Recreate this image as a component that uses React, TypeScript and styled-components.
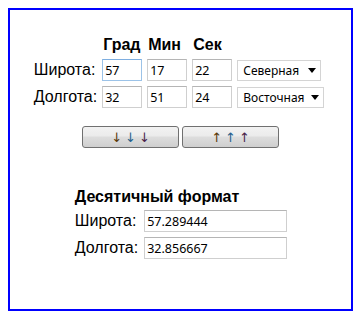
import styled, { createGlobalStyle } from "styled-components";

const GlobalStyle = createGlobalStyle`
  body {
    margin: 8px;
    background: #fff;
    font-family: "Liberation Sans", Arial, sans-serif;
  }
`;

const Frame = styled.div`
  box-sizing: border-box;
  width: 345px;
  height: 303px;
  border: 2px solid #0000ff;
  padding-top: 26px;
  display: flex;
  flex-direction: column;
  align-items: center;
`;

const CoordTable = styled.div`
  display: grid;
  grid-template-columns: auto 40px 40px 40px auto;
  column-gap: 5px;
  row-gap: 5px;
  align-items: center;
  margin-left: -3px;
`;

const HeadCell = styled.div<{ $col: number }>`
  grid-row: 1;
  grid-column: ${(p) => p.$col};
  font-size: 16px;
  font-weight: bold;
  line-height: 18px;
  color: #000;
  padding-left: 1px;
`;

const Label = styled.div`
  grid-column: 1;
  font-size: 16px;
  line-height: 18px;
  color: #000;
`;

const Field = styled.input<{ $width?: number; $focused?: boolean }>`
  box-sizing: border-box;
  width: ${(p) => (p.$width ? `${p.$width}px` : "40px")};
  height: 22px;
  margin: 0;
  padding: 0 2px;
  border: 1px solid ${(p) => (p.$focused ? "#9cc3e8" : "#cfcfcf")};
  border-top-color: ${(p) => (p.$focused ? "#7eaee0" : "#b5b5b5")};
  border-radius: 0;
  background: #fff;
  color: #000;
  font-family: "Noto Sans", Tahoma, sans-serif;
  font-size: 12.5px;
  outline: none;
`;

const SelectWrap = styled.div<{ $width: number }>`
  position: relative;
  width: ${(p) => p.$width}px;
  height: 21px;

  &::after {
    content: "";
    position: absolute;
    right: 5px;
    top: 8px;
    border-left: 4px solid transparent;
    border-right: 4px solid transparent;
    border-top: 5px solid #000;
    pointer-events: none;
  }
`;

const Select = styled.select`
  appearance: none;
  box-sizing: border-box;
  width: 100%;
  height: 100%;
  margin: 0;
  padding: 0 0 0 5px;
  border: 1px solid #d4d4d4;
  border-radius: 0;
  background: #fff;
  color: #000;
  font-family: "Noto Sans", Tahoma, sans-serif;
  font-size: 12px;
  outline: none;
`;

const ButtonRow = styled.div`
  display: flex;
  gap: 3px;
  margin-top: 18px;
`;

const ArrowButton = styled.button`
  box-sizing: border-box;
  width: 97px;
  height: 22px;
  margin: 0;
  padding: 2px 0 0;
  border: 1px solid #707070;
  border-radius: 3px;
  background: linear-gradient(#f2f2f2 0%, #ebebeb 45%, #dddddd 50%, #cfcfcf 100%);
  font-family: "DejaVu Sans", sans-serif;
  font-size: 13px;
  line-height: 17px;
  display: flex;
  justify-content: center;
  gap: 3px;
`;

const Arrow = styled.span<{ $color: string }>`
  color: ${(p) => p.$color};
`;

const DecimalTable = styled.div`
  margin-top: 40px;
  display: grid;
  grid-template-columns: auto 143px;
  column-gap: 6px;
  row-gap: 5px;
  align-items: center;
  margin-left: 1px;
`;

const Title = styled.div`
  grid-column: 1 / span 2;
  font-size: 16px;
  font-weight: bold;
  line-height: 18px;
  color: #000;
  margin-bottom: -1px;
`;

const arrowColors = ["#5a3a08", "#24608c", "#4a1f4a"];

export default function App() {
  return (
    <>
      <GlobalStyle />
      <Frame>
        <CoordTable>
          <HeadCell $col={1} />
          <HeadCell $col={2}>Град</HeadCell>
          <HeadCell $col={3}>Мин</HeadCell>
          <HeadCell $col={4}>Сек</HeadCell>

          <Label>Широта:</Label>
          <Field defaultValue="57" $focused />
          <Field defaultValue="17" />
          <Field defaultValue="22" />
          <SelectWrap $width={84}>
            <Select defaultValue="N">
              <option value="N">Северная</option>
              <option value="S">Южная</option>
            </Select>
          </SelectWrap>

          <Label>Долгота:</Label>
          <Field defaultValue="32" />
          <Field defaultValue="51" />
          <Field defaultValue="24" />
          <SelectWrap $width={87}>
            <Select defaultValue="E">
              <option value="E">Восточная</option>
              <option value="W">Западная</option>
            </Select>
          </SelectWrap>
        </CoordTable>

        <ButtonRow>
          <ArrowButton>
            {arrowColors.map((c, i) => (
              <Arrow key={i} $color={c}>↓</Arrow>
            ))}
          </ArrowButton>
          <ArrowButton>
            {arrowColors.map((c, i) => (
              <Arrow key={i} $color={c}>↑</Arrow>
            ))}
          </ArrowButton>
        </ButtonRow>

        <DecimalTable>
          <Title>Десятичный формат</Title>
          <Label>Широта:</Label>
          <Field defaultValue="57.289444" $width={143} />
          <Label>Долгота:</Label>
          <Field defaultValue="32.856667" $width={143} />
        </DecimalTable>
      </Frame>
    </>
  );
}
